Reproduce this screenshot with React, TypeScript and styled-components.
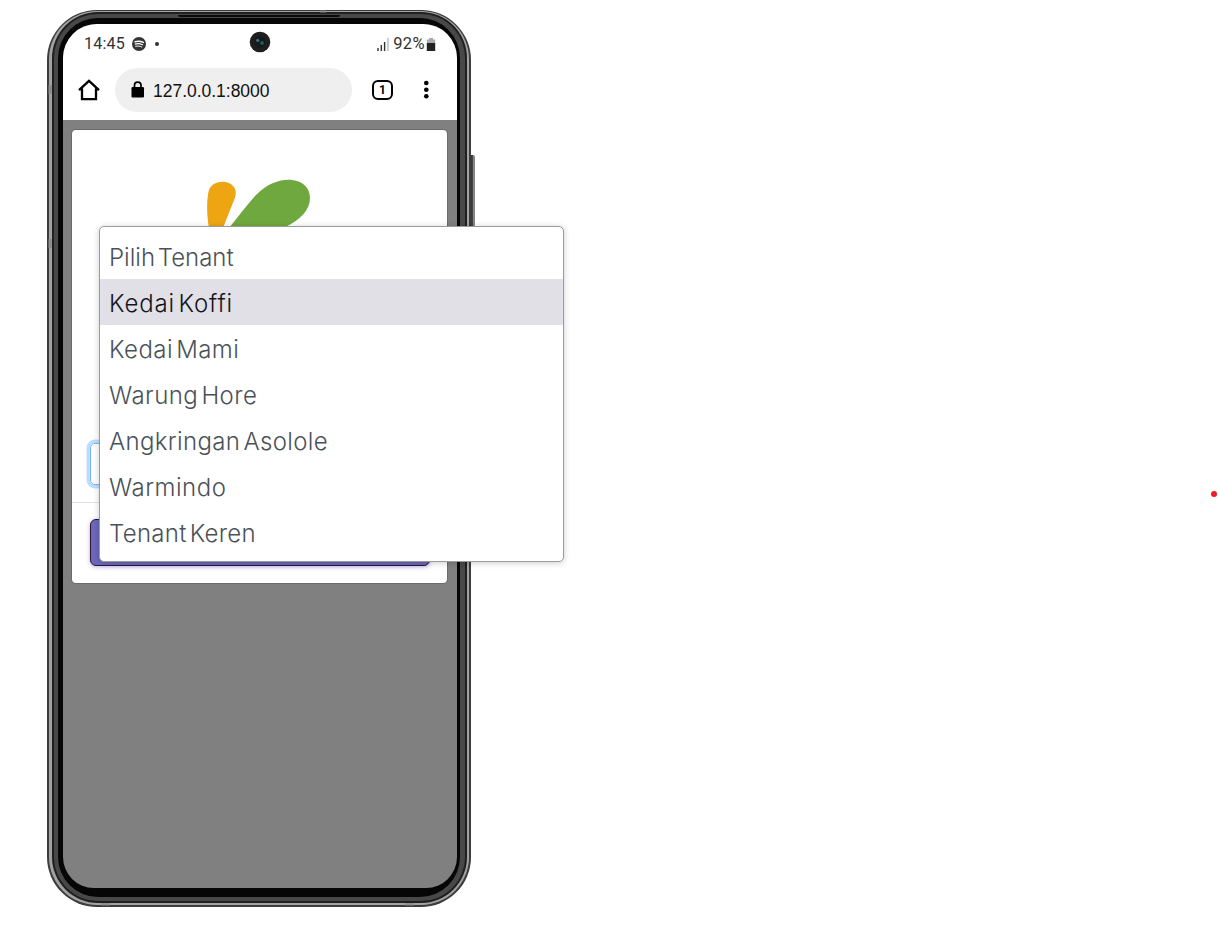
import React from "react";
import styled, { createGlobalStyle } from "styled-components";

const Global = createGlobalStyle`
  * { box-sizing: border-box; }
  body { margin: 0; background: #fff; overflow: hidden; }
`;

const Page = styled.main`
  position: relative;
  width: 1218px;
  height: 934px;
  padding: 10px 0 0 47px;
  background: #fff;
  overflow: hidden;
`;

const Phone = styled.div`
  position: relative;
  width: 424px;
  height: 897px;
`;

const Ring = styled.div<{ $color: string; $pad: string; $radius: number }>`
  height: 100%;
  background: ${(p) => p.$color};
  padding: ${(p) => p.$pad};
  border-radius: ${(p) => p.$radius}px;
`;

const SideButton = styled.div`
  position: absolute;
  left: 423px;
  top: 145px;
  width: 5px;
  height: 90px;
  border-radius: 0 2px 0 0;
  background: linear-gradient(90deg, #3a3a3a 0 2px, #444 2px 3px, #858585 3px 5px);
`;

const Speaker = styled.div`
  position: absolute;
  left: 131px;
  top: 5px;
  width: 162px;
  height: 2px;
  border-radius: 0 0 3px 3px;
  background: #0a0a0a;
`;

const Antenna = styled.div<{ $x: number; $y: number; $w: number; $h: number }>`
  position: absolute;
  left: ${(p) => p.$x}px;
  top: ${(p) => p.$y}px;
  width: ${(p) => p.$w}px;
  height: ${(p) => p.$h}px;
  background: rgba(125, 125, 125, 0.55);
`;

const Screen = styled.div`
  height: 100%;
  display: flex;
  flex-direction: column;
  overflow: hidden;
  border-radius: 34px 34px 31px 31px;
  background: #808080;
`;

const StatusBar = styled.div`
  position: relative;
  flex: 0 0 38px;
  display: flex;
  align-items: center;
  padding: 2px 21px 0 21px;
  background: #fff;
  color: #333;
  font: 400 16px/20px Roboto, sans-serif;
`;

const Clock = styled.span`
  width: 48px;
  letter-spacing: 0.25px;
`;

const Dot = styled.span`
  width: 4px;
  height: 4px;
  margin-left: 9px;
  border-radius: 50%;
  background: #333;
`;

const Camera = styled.svg`
  position: absolute;
  left: 186px;
  top: 7px;
`;

const StatusRight = styled.div`
  display: flex;
  align-items: center;
  margin-left: auto;
`;

const Percent = styled.span`
  margin: 0 1px 0 4px;
  font-size: 16.5px;
  letter-spacing: 0.4px;
`;

const BrowserBar = styled.div`
  flex: 0 0 58px;
  display: flex;
  align-items: flex-start;
  padding: 6px 0 0 15px;
  background: #fff;
`;

const HomeIcon = styled.svg`
  margin: 11px 15px 0 0;
`;

const Address = styled.div`
  display: flex;
  align-items: center;
  width: 237px;
  height: 44px;
  padding: 1px 0 0 15px;
  border-radius: 22px;
  background: #efefef;
  color: #111;
  font: 400 17.5px/22px "Liberation Sans", Arial, sans-serif;
  letter-spacing: -0.02px;
`;

const LockIcon = styled.svg`
  margin: -3px 8px 0 1px;
`;

const TabCount = styled.span`
  display: flex;
  align-items: center;
  justify-content: center;
  width: 21px;
  height: 20px;
  margin: 12px 0 0 20px;
  border: 2px solid #000;
  border-radius: 6px;
  font: 700 12px/14px Roboto, sans-serif;
`;

const MenuIcon = styled.svg`
  margin: 12px 0 0 30px;
`;

const Card = styled.section`
  margin: 10px 0 0 9px;
  width: 375px;
  height: 453px;
  display: flex;
  flex-direction: column;
  border-radius: 4px;
  background: #fff;
  box-shadow: 0 0 0 1px rgba(0, 0, 0, 0.16);
`;

const CardBody = styled.div`
  flex: 0 0 373px;
  display: flex;
  flex-direction: column;
  align-items: flex-start;
  padding-top: 49px;
  border-bottom: 1px solid #e3e3e6;
`;

const Logo = styled.svg`
  margin-left: 135px;
`;

const SelectField = styled.div`
  width: 340px;
  height: 42px;
  margin: 216px 0 0 18px;
  border: 1px solid #78b8f5;
  border-radius: 5px;
  box-shadow: 0 0 0 3.5px #bcdcff;
`;

const SubmitButton = styled.button`
  width: 340px;
  height: 47px;
  margin: 16px 0 0 18px;
  padding: 0;
  border: 1px solid #30182e;
  border-radius: 6px;
  background: #6b67bb;
  box-shadow: 0 1px 4px rgba(90, 80, 200, 0.45);
`;

const Menu = styled.ul`
  position: absolute;
  left: 99px;
  top: 226px;
  width: 465px;
  height: 336px;
  margin: 0;
  padding: 6px 0 0;
  list-style: none;
  background: #fff;
  border: 1px solid #9b9b9b;
  border-radius: 5px;
  box-shadow: 0 1px 6px rgba(0, 0, 0, 0.2);
`;

const Option = styled.li<{ $active?: boolean; $spacing: number }>`
  height: 46px;
  padding: 2px 0 0 9px;
  background: ${(p) => (p.$active ? "#e1e0e7" : "transparent")};
  color: ${(p) => (p.$active ? "#15141c" : "#4b5158")};
  font: 300 24px/46px Inter, sans-serif;
  letter-spacing: ${(p) => p.$spacing}px;
  word-spacing: -4px;
  white-space: nowrap;
`;

const RedDot = styled.div`
  position: absolute;
  left: 1211px;
  top: 491px;
  width: 6px;
  height: 6px;
  border-radius: 50%;
  background: #ed1c24;
`;

const tenants = [
  { name: "Pilih Tenant", spacing: 0 },
  { name: "Kedai Koffi", spacing: 0.85, active: true },
  { name: "Kedai Mami", spacing: 0.45 },
  { name: "Warung Hore", spacing: 0.45 },
  { name: "Angkringan Asolole", spacing: 0.35 },
  { name: "Warmindo", spacing: 0.5 },
  { name: "Tenant Keren", spacing: 0.3 },
];

const PhoneScreen = () => (
  <Screen>
    <StatusBar>
      <Clock>14:45</Clock>
      <svg width="14" height="14" viewBox="0 0 14 14">
        <circle cx="7" cy="7" r="7" fill="#333" />
        <g fill="none" stroke="#fff" strokeLinecap="round">
          <path d="M3 4.7C6 3.9 9 4.2 11.4 5.4" strokeWidth="1.4" />
          <path d="M3.3 7.1C6 6.4 8.5 6.7 10.6 7.8" strokeWidth="1.2" />
          <path d="M3.6 9.3C6 8.8 8 9 9.8 10" strokeWidth="1" />
        </g>
      </svg>
      <Dot />
      <Camera width="22" height="22" viewBox="0 0 22 22">
        <circle cx="11" cy="11" r="10.3" fill="#1c1e1f" />
        <circle cx="11" cy="11" r="5.5" fill="#121a1c" />
        <circle cx="8.7" cy="9.3" r="1.6" fill="#3d7580" />
        <circle cx="13" cy="12" r="2" fill="#28525a" />
      </Camera>
      <StatusRight>
        <svg width="12" height="13" viewBox="0 0 12 13">
          <path d="M1 10v3M4.3 7v6M7.6 4v9" stroke="#333" strokeWidth="1.4" />
          <path d="M11 0v13" stroke="#bbb" strokeWidth="1.4" />
        </svg>
        <Percent>92%</Percent>
        <svg width="10" height="13" viewBox="0 0 10 13">
          <path d="M3 0h4v1.5h2.2v3.5H.8V1.5H3z" fill="#aaa" />
          <path d="M.8 5h8.4v8H.8z" fill="#222" />
        </svg>
      </StatusRight>
    </StatusBar>
    <BrowserBar>
      <HomeIcon width="22" height="22" viewBox="0 0 22 22">
        <path d="M1 11.200L11 1.900 21 11.200M4 9.500V20.200H18V9.500" fill="none" stroke="#000" strokeWidth="2.300" />
      </HomeIcon>
      <Address>
        <LockIcon width="14" height="17" viewBox="0 0 14 17">
          <rect x=".5" y="6" width="12.500" height="10.500" rx="1.200" fill="#000" />
          <path d="M3.500 7V4.300a3.250 3.250 0 016.500 0V7" fill="none" stroke="#000" strokeWidth="1.700" />
        </LockIcon>
        127.0.0.1:8000
      </Address>
      <TabCount>1</TabCount>
      <MenuIcon width="6" height="20" viewBox="0 0 6 20">
        <circle cx="3.300" cy="3" r="2.300" />
        <circle cx="3.300" cy="9.700" r="2.300" />
        <circle cx="3.300" cy="16.300" r="2.300" />
      </MenuIcon>
    </BrowserBar>
    <Card>
      <CardBody>
        <Logo width="104" height="48" viewBox="207 179 104 48">
          <path d="M209 228C206 212 207 197 209 190C212 181 227 179 233 186C237 190 236 195 234 200L223 228Z" fill="#eda612" />
          <path d="M229 228C238 217 247 205 256 195C268 183 281 179 292 180C303 181 310 188 310 198C310 211 299 221 283 228Z" fill="#6fa83f" />
        </Logo>
        <SelectField />
      </CardBody>
      <SubmitButton aria-label="Submit" />
    </Card>
  </Screen>
);

export default function App() {
  return (
    <Page>
      <Global />
      <Phone>
        <SideButton />
        <Ring $color="#3c3c3c" $pad="1px 2px 2px 2px" $radius={50}>
          <Ring $color="#a2a2a2" $pad="1px 2px 2px 3px" $radius={48}>
            <Ring $color="#202020" $pad="2px 2px 2px 2px" $radius={46}>
              <Ring $color="#484848" $pad="4px 5px 4px 4px" $radius={44}>
                <Ring $color="#060606" $pad="6px 3px 9px 5px" $radius={40}>
                  <PhoneScreen />
                </Ring>
              </Ring>
            </Ring>
          </Ring>
        </Ring>
        <Speaker />
        <Antenna $x={1} $y={75} $w={4} $h={9} />
        <Antenna $x={1} $y={229} $w={4} $h={9} />
        <Antenna $x={273} $y={0} $w={6} $h={3} />
        <Antenna $x={54} $y={893} $w={9} $h={3} />
        <Antenna $x={358} $y={893} $w={9} $h={3} />
      </Phone>
      <Menu>
        {tenants.map((t) => (
          <Option key={t.name} $active={t.active} $spacing={t.spacing}>
            {t.name}
          </Option>
        ))}
      </Menu>
      <RedDot />
    </Page>
  );
}
